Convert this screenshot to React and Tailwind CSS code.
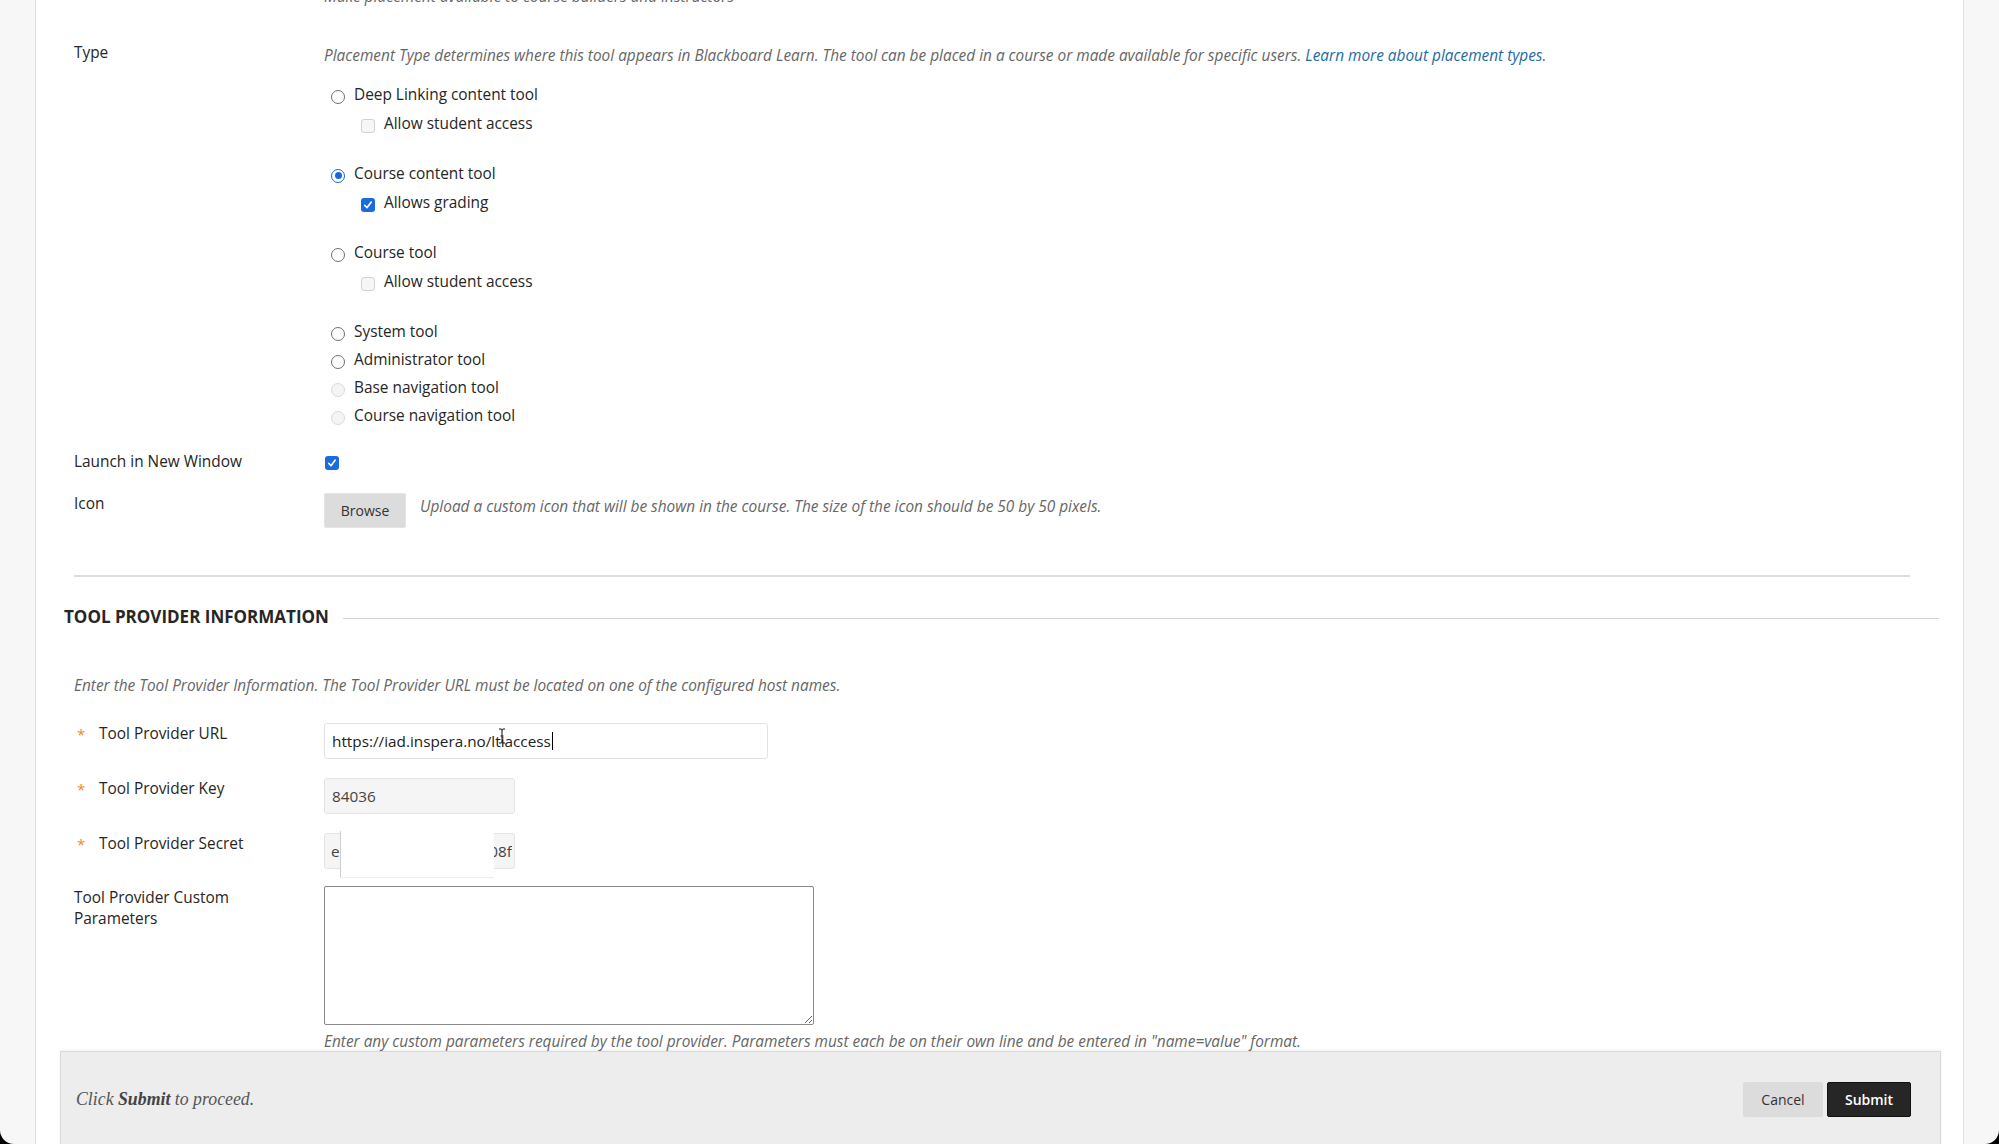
import React from "react";

const sans = "font-['Open_Sans',_'Liberation_Sans',_sans-serif]";

function Radio({ checked, disabled }) {
  if (checked) {
    return (
      <span className="flex h-[14px] w-[14px] shrink-0 items-center justify-center rounded-full border-[1.5px] border-[#1669d8] bg-white">
        <span className="block h-[7px] w-[7px] rounded-full bg-[#1669d8]" />
      </span>
    );
  }
  return (
    <span
      className={
        disabled
          ? "block h-[14px] w-[14px] shrink-0 rounded-full border border-[#dcdcdc] bg-[#f4f4f4]"
          : "block h-[14px] w-[14px] shrink-0 rounded-full border border-[#6f6f6f] bg-white"
      }
    />
  );
}

function Check({ checked }) {
  if (checked) {
    return (
      <span className="flex h-[14px] w-[14px] shrink-0 items-center justify-center rounded-[3px] bg-[#1a6be0]">
        <svg viewBox="0 0 14 14" className="h-[12px] w-[12px]">
          <path d="M3.2 7.4 L5.8 10.2 L10.8 3.6" fill="none" stroke="#fff" strokeWidth="1.9" strokeLinecap="round" strokeLinejoin="round" />
        </svg>
      </span>
    );
  }
  return <span className="block h-[14px] w-[14px] shrink-0 rounded-[3px] border border-[#d2d2d2] bg-[#f6f6f6]" />;
}

function RadioRow({ label, checked, disabled }) {
  return (
    <div className="flex h-[28px] items-center">
      <div className="ml-[7px] mt-[3px]">
        <Radio checked={checked} disabled={disabled} />
      </div>
      <span className="ml-[9px] text-[15.4px] text-[#262626]">{label}</span>
    </div>
  );
}

function SubCheck({ label, checked }) {
  return (
    <div className="flex h-[30px] items-center">
      <div className="ml-[37px] mt-[3px]">
        <Check checked={checked} />
      </div>
      <span className="ml-[9px] text-[15.4px] text-[#262626]">{label}</span>
    </div>
  );
}

function Star() {
  return <span className="w-[24px] shrink-0 pl-[2px] text-[15px] text-[#f08a24]">*</span>;
}

export default function App() {
  return (
    <div className={`${sans} h-[1144px] w-full overflow-hidden bg-black`}>
      <div className="flex h-full w-full overflow-hidden rounded-b-[14px] bg-[#f7f7f7]">
        {/* left gutter */}
        <div className="w-[36px] shrink-0 border-r border-[#dedede]" />

        {/* main form column */}
        <div className="flex min-w-0 flex-1 flex-col bg-white">
          <div className="shrink-0 pl-[288px] -mt-[13px] leading-[20px] text-[15.4px] italic text-[#666]">
            Make placement available to course builders and instructors
          </div>

          {/* Type */}
          <div className="mt-[36px] flex shrink-0 pl-[38px]">
            <div className="w-[250px] shrink-0 text-[15.4px] leading-[20px] text-[#262626]">Type</div>
            <div className="flex flex-col">
              <p className="mt-[3px] text-[15.4px] leading-[20px] italic text-[#666]">
                Placement Type determines where this tool appears in Blackboard Learn. The tool can be placed in a course or made available for specific users.{" "}
                <a className="text-[#1d6aa5]">Learn more about placement types.</a>
              </p>
              <div className="mt-[15px] flex flex-col">
                <RadioRow label="Deep Linking content tool" />
                <SubCheck label="Allow student access" />
                <div className="h-[21px] shrink-0" />
                <RadioRow label="Course content tool" checked />
                <SubCheck label="Allows grading" checked />
                <div className="h-[21px] shrink-0" />
                <RadioRow label="Course tool" />
                <SubCheck label="Allow student access" />
                <div className="h-[21px] shrink-0" />
                <RadioRow label="System tool" />
                <RadioRow label="Administrator tool" />
                <RadioRow label="Base navigation tool" disabled />
                <RadioRow label="Course navigation tool" disabled />
              </div>
            </div>
          </div>

          {/* Launch in new window */}
          <div className="mt-[22px] flex shrink-0 items-center pl-[38px]">
            <div className="w-[250px] shrink-0 text-[15.4px] leading-[20px] text-[#262626]">Launch in New Window</div>
            <div className="ml-[1px] mt-[2px]">
              <Check checked />
            </div>
          </div>

          {/* Icon */}
          <div className="mt-[21px] flex shrink-0 items-start pl-[38px]">
            <div className="w-[250px] shrink-0 pt-[1px] text-[15.4px] leading-[20px] text-[#262626]">Icon</div>
            <button className="h-[35px] w-[82px] shrink-0 rounded-[2px] border border-[#e4e4e4] bg-[#dcdcdc] text-[14px] text-[#333]">
              Browse
            </button>
            <p className="ml-[14px] pt-[4px] text-[15.4px] leading-[20px] italic text-[#666]">
              Upload a custom icon that will be shown in the course. The size of the icon should be 50 by 50 pixels.
            </p>
          </div>

          <div className="ml-[38px] mr-[53px] mt-[47px] h-[2px] shrink-0 bg-[#dddddd]" />

          {/* Section header */}
          <div className="ml-[28px] mr-[24px] mt-[30px] flex shrink-0 items-center">
            <h2 className="text-[17px] font-bold leading-[20px] text-[#262626]">TOOL PROVIDER INFORMATION</h2>
            <div className="ml-[14px] mt-[3px] h-px flex-1 bg-[#d4d4d4]" />
          </div>

          <p className="ml-[38px] mt-[49px] shrink-0 text-[15.4px] leading-[20px] italic text-[#666]">
            Enter the Tool Provider Information. The Tool Provider URL must be located on one of the configured host names.
          </p>

          {/* URL */}
          <div className="mt-[27px] flex shrink-0 items-start pl-[39px]">
            <div className="flex w-[249px] shrink-0 pt-[1px] text-[15.4px] leading-[20px] text-[#262626]">
              <Star />
              <span>Tool Provider URL</span>
            </div>
            <div className="relative flex h-[36px] w-[444px] items-center rounded-[3px] border border-[#e2e2e2] bg-white px-[7px] text-[15.3px] text-[#222]">
              <span>https://iad.inspera.no/ltiaccess</span>
              <span className="ml-px block h-[18px] w-px bg-black" />
              {/* mouse I-beam pointer */}
              <svg viewBox="0 0 8 16" className="absolute left-[173px] top-[4px] h-[16px] w-[8px]">
                <path d="M1 1 H3 Q4 1 4 2.5 V13.5 Q4 15 3 15 H1 M7 1 H5 Q4 1 4 2.5 M4 13.5 Q4 15 5 15 H7 M2.5 8 H5.5" fill="none" stroke="#111" strokeWidth="1" />
              </svg>
            </div>
          </div>

          {/* Key */}
          <div className="mt-[19px] flex shrink-0 items-start pl-[39px]">
            <div className="flex w-[249px] shrink-0 pt-[1px] text-[15.4px] leading-[20px] text-[#262626]">
              <Star />
              <span>Tool Provider Key</span>
            </div>
            <div className="flex h-[36px] w-[191px] items-center rounded-[3px] border border-[#e4e4e4] bg-[#f5f5f5] px-[7px] text-[15.3px] text-[#444]">
              84036
            </div>
          </div>

          {/* Secret */}
          <div className="mt-[19px] flex shrink-0 items-start pl-[39px]">
            <div className="flex w-[249px] shrink-0 pt-[1px] text-[15.4px] leading-[20px] text-[#262626]">
              <Star />
              <span>Tool Provider Secret</span>
            </div>
            <div className="relative flex h-[36px] w-[191px] items-center justify-between rounded-[3px] border border-[#e4e4e4] bg-[#f5f5f5] px-[6px] text-[15.3px] text-[#444]">
              <span>e</span>
              <span className="-mr-[4px] overflow-hidden">08f</span>
              {/* redacted value */}
              <div className="absolute left-[15px] top-[-3px] h-[47px] w-[154px] border-b border-l border-[#cfcfcf] border-b-[#eeeeee] bg-white" />
            </div>
          </div>

          {/* Custom parameters */}
          <div className="mt-[17px] flex shrink-0 items-start pl-[38px]">
            <div className="w-[250px] shrink-0 pt-[1px] text-[15.4px] leading-[21px] text-[#262626]">
              Tool Provider Custom
              <br />
              Parameters
            </div>
            <textarea className="h-[139px] w-[490px] resize rounded-[2px] border border-[#8a8a8a] bg-white" />
          </div>
          <p className="ml-[288px] mt-[7px] shrink-0 text-[15.4px] leading-[20px] italic text-[#666]">
            Enter any custom parameters required by the tool provider. Parameters must each be on their own line and be entered in "name=value" format.
          </p>

          {/* submit bar */}
          <div className="relative ml-[24px] mr-[22px] -mt-[1px] flex h-[110px] shrink-0 items-start justify-between border border-[#d9d9d9] bg-[#ededed] shadow-[0_-1px_3px_rgba(0,0,0,0.06)]">
            <p className="ml-[15px] mt-[34px] font-['Liberation_Serif',_serif] text-[17.8px] italic text-[#555]">
              Click <b className="text-[#444]">Submit</b> to proceed.
            </p>
            <div className="mr-[29px] mt-[30px] flex gap-[4px]">
              <button className="h-[35px] w-[80px] rounded-[2px] bg-[#dcdcdc] text-[14px] text-[#333]">Cancel</button>
              <button className="h-[35px] w-[84px] rounded-[2px] border border-[#111] bg-[#262626] text-[14px] font-semibold text-white">
                Submit
              </button>
            </div>
          </div>
        </div>

        {/* right gutter */}
        <div className="w-[36px] shrink-0 border-l border-[#dedede]" />
      </div>
    </div>
  );
}
